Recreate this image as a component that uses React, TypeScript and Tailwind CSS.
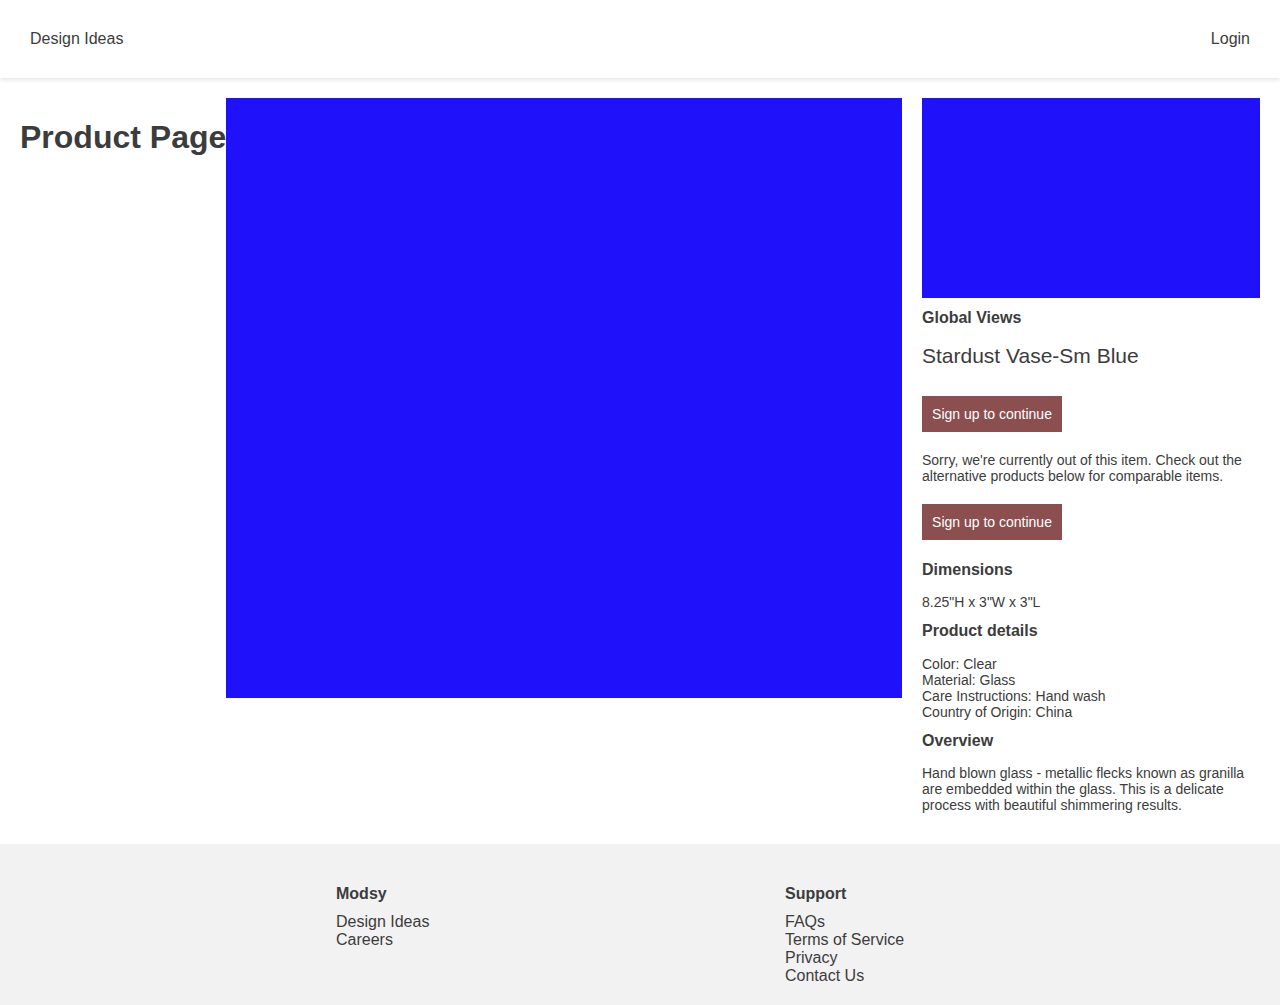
import React from "react";

export default function App() {
  const font = { fontFamily: '"Liberation Sans", Arial, Helvetica, sans-serif' };
  return (
    <div style={font} className="min-h-[1005px] bg-white text-[#3c3c3c] flex flex-col">
      <header className="h-[78px] flex items-center justify-between px-[30px] shadow-[0_2px_4px_rgba(0,0,0,0.1)] relative z-10 bg-white text-[16px]">
        <a className="leading-[18px]">Design Ideas</a>
        <a className="leading-[18px]">Login</a>
      </header>
      <main className="flex p-[20px] pb-[31px]">
        <h1 className="text-[32px] font-bold leading-[37px] mt-[21px] whitespace-nowrap w-[206px] shrink-0">Product Page</h1>
        <div className="flex-1 h-[600px] bg-[#1f11f9]" />
        <div className="w-[338px] shrink-0 ml-[20px] flex flex-col">
          <div className="h-[200px] bg-[#1f11f9]" />
          <div className="mt-[11px] text-[16px] font-bold leading-[18px]">Global Views</div>
          <div className="mt-[17px] text-[21px] leading-[24px]">Stardust Vase-Sm Blue</div>
          <button className="mt-[28px] self-start w-[140px] h-[36px] bg-[#8b4f4f] text-white text-[14px] leading-[16px]">Sign up to continue</button>
          <p className="mt-[20px] text-[14px] leading-[16px]">Sorry, we're currently out of this item. Check out the alternative products below for comparable items.</p>
          <button className="mt-[20px] self-start w-[140px] h-[36px] bg-[#8b4f4f] text-white text-[14px] leading-[16px]">Sign up to continue</button>
          <div className="mt-[21px] text-[16px] font-bold leading-[18px]">Dimensions</div>
          <p className="mt-[15px] text-[14px] leading-[16px]">8.25"H x 3"W x 3"L</p>
          <div className="mt-[12px] text-[16px] font-bold leading-[18px]">Product details</div>
          <p className="mt-[16px] text-[14px] leading-[16px]">
            Color: Clear<br />Material: Glass<br />Care Instructions: Hand wash<br />Country of Origin: China
          </p>
          <div className="mt-[12px] text-[16px] font-bold leading-[18px]">Overview</div>
          <p className="mt-[15px] text-[14px] leading-[16px]">Hand blown glass - metallic flecks known as granilla are embedded within the glass. This is a delicate process with beautiful shimmering results.</p>
        </div>
      </main>
      <footer className="bg-[#f2f2f2] pt-[41px] pb-[20px] pl-[336px] flex">
        <div className="w-[449px]">
          <div className="text-[16px] font-bold leading-[18px]">Modsy</div>
          <ul className="mt-[10px] text-[16px] leading-[18px]">
            <li>Design Ideas</li>
            <li>Careers</li>
          </ul>
        </div>
        <div>
          <div className="text-[16px] font-bold leading-[18px]">Support</div>
          <ul className="mt-[10px] text-[16px] leading-[18px]">
            <li>FAQs</li>
            <li>Terms of Service</li>
            <li>Privacy</li>
            <li>Contact Us</li>
          </ul>
        </div>
      </footer>
    </div>
  );
}
